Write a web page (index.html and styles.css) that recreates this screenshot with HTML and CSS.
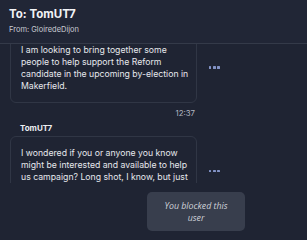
FILE: index.html
```html
<!DOCTYPE html>
<html>
<head>
<meta charset="utf-8">
<link rel="stylesheet" href="styles.css">
</head>
<body>
<div class="app">
  <header class="header">
    <div class="to">To: TomUT7</div>
    <div class="from">From: GloiredeDijon</div>
  </header>
  <div class="thread">
    <div class="list">
      <div class="row">
        <div class="bubble">I am looking to bring together some people to help support the Reform candidate in the upcoming by-election in Makerfield.</div>
        <div class="more"><span></span><span></span><span></span></div>
      </div>
      <div class="time">12:37</div>
      <div class="name">TomUT7</div>
      <div class="row">
        <div class="bubble tall">I wondered if you or anyone you know might be interested and available to help us campaign? Long shot, I know, but just</div>
        <div class="more"><span></span><span></span><span></span></div>
      </div>
    </div>
  </div>
  <footer class="footer">
    <div class="blocked">You blocked this user</div>
  </footer>
</div>
</body>
</html>
```

FILE: styles.css
```css
html, body {
  margin: 0;
  padding: 0;
  background: #1f2433;
}
body {
  font-family: Inter, "Liberation Sans", sans-serif;
  color: #e6e8ed;
  width: 307px;
  height: 240px;
  overflow: hidden;
}
.app {
  display: flex;
  flex-direction: column;
  height: 240px;
}
.header {
  height: 44px;
  box-sizing: border-box;
  padding: 7px 9px 0;
  border-bottom: 1px solid #343a49;
  background: #212636;
}
.to {
  font-size: 11.5px;
  font-weight: 700;
  line-height: 15px;
  color: #f2f3f6;
}
.from {
  margin-top: 3px;
  font-size: 7.5px;
  line-height: 10px;
  color: #c9ccd4;
}
.thread {
  height: 139px;
  overflow: hidden;
}
.list {
  margin-top: -11.5px;
  display: flex;
  flex-direction: column;
}
.row {
  display: flex;
  align-items: center;
}
.bubble {
  width: 187px;
  margin-left: 10px;
  box-sizing: border-box;
  padding: 10px 3px 9.5px 10px;
  border: 1px solid #303645;
  border-radius: 6px;
  font-size: 8.7px;
  line-height: 12.2px;
  color: #e6e8ed;
}
.bubble.tall {
  padding-bottom: 22px;
}
.more {
  display: flex;
  gap: 1.8px;
  margin-left: 12px;
}
.more span {
  width: 2.4px;
  height: 2.4px;
  background: #8393c6;
  border-radius: 0.5px;
}
.time {
  width: 195px;
  margin-top: 5px;
  text-align: right;
  font-size: 7.8px;
  line-height: 11px;
  color: #b3b7c1;
}
.name {
  margin: 3.7px 0 2.3px 20px;
  font-size: 8px;
  font-weight: 700;
  line-height: 11px;
  color: #eceef2;
}
.footer {
  flex: 1;
  display: flex;
  align-items: flex-start;
  padding: 9px 0 0 147px;
}
.blocked {
  width: 98px;
  box-sizing: border-box;
  padding: 7.5px 14px 7px;
  background: #383e4d;
  border-radius: 5px;
  text-align: center;
  font-family: "Open Sans", "Liberation Sans", sans-serif;
  font-style: italic;
  font-size: 8.8px;
  line-height: 12.3px;
  color: #cfd2d9;
}
```
